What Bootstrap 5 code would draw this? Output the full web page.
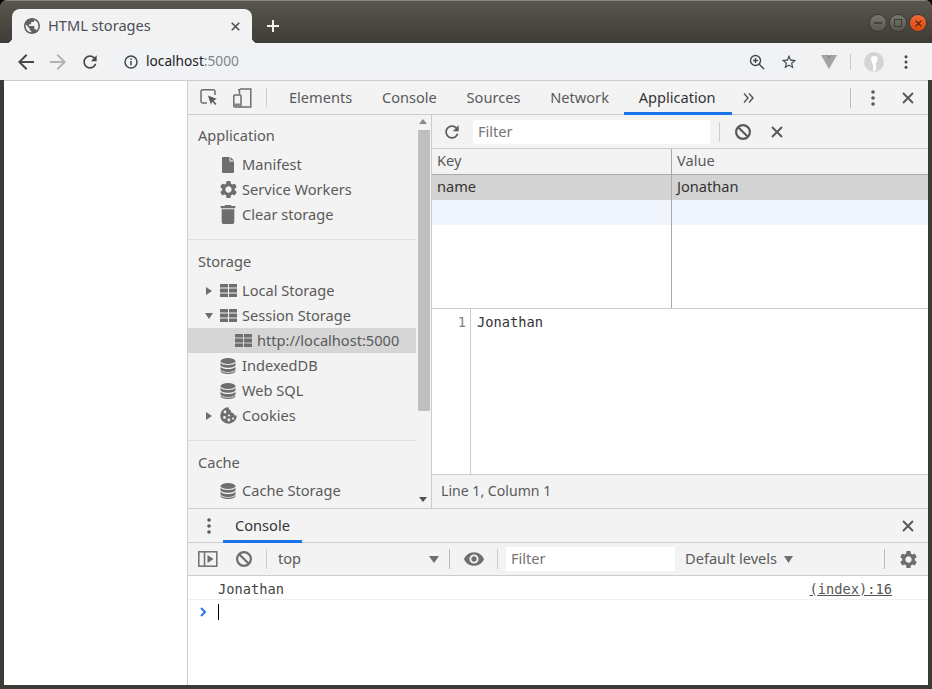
<!DOCTYPE html>
<html lang="en"><head><meta charset="utf-8"><title>HTML storages</title>
<link rel="stylesheet" href="https://cdn.jsdelivr.net/npm/bootstrap@5.3.0/dist/css/bootstrap.min.css">
<style>
html,body{margin:0;height:689px;overflow:hidden;background:#000}
body{font-family:"Noto Sans","Liberation Sans",sans-serif;font-size:14.6px;color:#5a5a5a;line-height:1.2}
svg{display:block;flex:none}
.win{width:932px;height:689px;background:#3c3b37;border-radius:7px 7px 0 0;overflow:hidden}
.titlebar{height:43px;flex:none;background:linear-gradient(#59564e,#3e3c36);border-top:1px solid #85857f;padding-left:12px}
.btab{width:240px;height:34px;margin-top:8px;background:#f2f2f2;border-radius:8px 8px 0 0;padding:0 12px 0 12px;color:#4a5058;font-size:14.6px;position:relative}
.btab::before,.btab::after{content:"";position:absolute;bottom:0;width:6px;height:6px}
.btab::before{left:-6px;background:radial-gradient(circle at 0 0,transparent 6px,#f2f2f2 6.500px)}
.btab::after{right:-6px;background:radial-gradient(circle at 100% 0,transparent 6px,#f2f2f2 6.500px)}
.plus{margin-left:15px;margin-top:19px}
.wbtns{margin-left:auto;padding-right:6px;gap:4px;margin-top:2px}
.wb{width:16px;height:16px;border-radius:50%;background:linear-gradient(#77766f,#57564f);box-shadow:0 0 0 1px #3a3934}
.wb.cl{background:linear-gradient(#f0693a,#d9480f)}
.mainwrap{padding:0 4px 4px;height:609px;flex:none}
.chrome-bar{height:37px;flex:none;background:#f2f2f2}
.navic{width:32px}
.omni{width:694px;height:29px;background:#f0f2f5;border-radius:15px;margin-left:6px;padding:0 9px 0 12px;color:#202124;font-size:13.7px}
.omni .port{color:#80868b}
.rtools{padding-left:10px}
.vsep{width:1px;background:#ccc;flex:none}
.bodyrow{height:605px;border-top:1px solid #ccc;background:#fff}
.pagearea{width:184px;background:#fff;border-right:1px solid #ccc;flex:none}
.dt{width:740px;background:#fff}
.dttabs{height:34px;background:#f3f3f3;border-bottom:1px solid #ccc;flex:none}
.dtic{width:33px}
.tb{height:33px;padding:0 14.9px;line-height:32px;color:#5a5a5a;position:relative;flex:none}
.tb.on{color:#333}
.tb.on::after{content:"";position:absolute;left:0;right:-1px;bottom:-1px;height:3px;background:#1a73e8}
.tb.dwr{margin-left:12px;padding:0 12px}
.tb.dwr::after{left:0;right:0}
.sb{width:244px;flex:none;background:#f3f3f3;border-right:1px solid #ccc;height:393px;overflow:hidden}
.sbin{width:228px;flex:none}
.sect{padding:9px 0 12px;border-bottom:1px solid #e0e0e0}
.sect.first{padding-top:8px}
.sh{height:25px;line-height:25px;padding-left:10px;margin-bottom:4px;color:#5a5a5a}
.sect.border-0 .sh{margin-bottom:3px}
.si{height:25px;color:#5a5a5a;padding-left:30px;gap:4px}
.si.ex{padding-left:16px}
.si.sel{background:#d6d6d6;padding-left:45px}
.si .ic{width:20px;display:flex;justify-content:center}
.si .ic.tm{margin-left:-4px}
.tw{width:10px;margin-right:4px;flex:none}
.sbar{width:15px;flex:none;padding-left:2px;background:#f3f3f3;position:relative}
.thumb{height:281px;width:12px;background:#bfbfbf;margin-top:15px}
.arr{width:0;height:0;border-left:4px solid transparent;border-right:4px solid transparent;position:absolute;left:3px}
.arr.u{top:4px;border-bottom:5px solid #8a8a8a}
.arr.d{bottom:6px;border-top:5px solid #505050}
.rp{width:496px;flex:none;height:393px}
.rt{height:34px;background:#f3f3f3;border-bottom:1px solid #ccc;flex:none;padding-left:8px}
.filt{background:#fff;height:24px;line-height:22px;padding-left:5px;color:#757575;flex:none}
.th{height:26px;background:#f3f3f3;border-bottom:1px solid #aaa;flex:none}
.c1{width:240px;flex:none;border-right:1px solid #aaa;padding-left:5px;line-height:23px;height:100%}
.c2{padding-left:5px;flex:1;line-height:23px;height:100%}
.tr{height:25px;flex:none}
.tr.s{background:#d3d3d3;color:#333}
.tr.z{background:#f0f5fd}
.fill{height:83px;flex:none}
.ed{flex:1;border-top:1px solid #ccc;min-height:0;background:#fff;font:13.7px/1 "DejaVu Sans Mono",monospace}
.gut{width:39px;border-right:1px solid #ccc;text-align:right;padding:7px 4px 0 0;color:#808080;flex:none}
.code{padding:7px 0 0 6px;color:#333}
.stb{height:34px;background:#f3f3f3;border-top:1px solid #ccc;flex:none;padding-left:9px;color:#5a5a5a;font-size:14.1px}
.dr{height:35px;background:#f3f3f3;border-top:1px solid #ccc;border-bottom:1px solid #ccc;flex:none}
.ct{height:33px;background:#f3f3f3;border-bottom:1px solid #ccc;flex:none}
.log{height:24px;border-bottom:1px solid #f0f0f0;font:13.7px/26px "DejaVu Sans Mono",monospace;color:#444;padding:0 36px 0 30px;background:#fff;flex:none}
.log u{color:#555}
.prompt{height:24px;padding-left:12px;background:#fff;flex:none}
.caret{width:1px;height:16px;background:#000;margin-left:11px}
.lvl{color:#5a5a5a}
</style></head><body>
<svg width="0" height="0" class="position-absolute">
<defs>
<symbol id="x" viewBox="0 0 12 12"><path d="M1 1l10 10M11 1L1 11" stroke="currentColor" stroke-width="2" fill="none"/></symbol>
<symbol id="dots" viewBox="0 0 4 16"><circle cx="2" cy="2" r="1.8"/><circle cx="2" cy="8" r="1.8"/><circle cx="2" cy="14" r="1.8"/></symbol>
<symbol id="grid" viewBox="0 0 17 13"><path d="M0 0h8v3.4H0zM9 0h8v3.4H9zM0 4.6h8v3.8H0zM9 4.6h8v3.8H9zM0 9.6h8V13H0zM9 9.6h8V13H9z"/></symbol>
<symbol id="db" viewBox="0 0 16 16"><ellipse cx="8" cy="3" rx="7.5" ry="3"/><path d="M.5 4.6C1.5 6.4 4.6 7 8 7s6.500-.6 7.500-2.400V7c0 1.600-3.400 2.800-7.500 2.800S.5 8.600.5 7zM.5 8.800c1 1.800 4.100 2.300 7.500 2.300s6.500-.5 7.500-2.300v2.400c0 1.600-3.400 2.800-7.500 2.800S.5 12.800.5 11.200zM.5 12.500c1 1.700 4.100 2.200 7.500 2.200s6.500-.5 7.500-2.200v.5c0 1.600-3.400 3-7.500 3s-7.500-1.400-7.500-3z"/></symbol>
<symbol id="gear" viewBox="0 0 24 24"><path fill-rule="evenodd" d="M19.14 12.94c.04-.3.06-.61.06-.94 0-.32-.02-.64-.07-.94l2.03-1.58a.49.49 0 0 0 .12-.61l-1.92-3.32a.488.488 0 0 0-.59-.22l-2.39.96c-.5-.38-1.03-.7-1.62-.94l-.36-2.54a.484.484 0 0 0-.48-.41h-3.84c-.24 0-.43.17-.47.41l-.36 2.54c-.59.24-1.13.57-1.62.94l-2.39-.96c-.22-.08-.47 0-.59.22L2.74 8.87c-.12.21-.08.47.12.61l2.03 1.58c-.05.3-.09.63-.09.94s.02.64.07.94l-2.03 1.58a.49.49 0 0 0-.12.61l1.92 3.32c.12.22.37.29.59.22l2.39-.96c.5.38 1.03.7 1.62.94l.36 2.54c.05.24.24.41.48.41h3.84c.24 0 .44-.17.47-.41l.36-2.54c.59-.24 1.13-.56 1.62-.94l2.39.96c.22.08.47 0 .59-.22l1.92-3.32c.12-.22.07-.47-.12-.61l-2.01-1.58zM12 15.600c-1.98 0-3.600-1.620-3.600-3.600s1.620-3.600 3.600-3.600 3.600 1.620 3.600 3.600-1.620 3.600-3.600 3.600z"/></symbol>
<symbol id="reload" viewBox="0 0 24 24"><path d="M17.65 6.35C16.2 4.9 14.21 4 12 4c-4.42 0-7.99 3.58-7.99 8s3.57 8 7.99 8c3.73 0 6.84-2.55 7.73-6h-2.08c-.82 2.33-3.04 4-5.65 4-3.31 0-6-2.69-6-6s2.69-6 6-6c1.66 0 3.14.69 4.22 1.78L13 11h7V4l-2.35 2.35z"/></symbol>
<symbol id="block" viewBox="0 0 16 16"><circle cx="8" cy="8" r="6.900" fill="none" stroke="currentColor" stroke-width="2.200"/><path d="M3.200 3.200l9.600 9.600" stroke="currentColor" stroke-width="2.200"/></symbol>
</defs></svg>
<div class="win d-flex flex-column">
 <div class="titlebar d-flex align-items-start">
  <div class="btab d-flex align-items-center flex-shrink-0">
   <svg width="16" height="16" viewBox="2 2 20 20" fill="#5f6368"><path d="M12 2C6.48 2 2 6.48 2 12s4.48 10 10 10 10-4.48 10-10S17.52 2 12 2zm-1 17.930c-3.950-.49-7-3.850-7-7.930 0-.62.08-1.210.21-1.790L9 15v1c0 1.100.9 2 2 2v1.930zm6.900-2.540c-.26-.81-1-1.390-1.900-1.390h-1v-3c0-.55-.45-1-1-1H8v-2h2c.55 0 1-.45 1-1V7h2c1.100 0 2-.9 2-2v-.41c2.930 1.190 5 4.060 5 7.410 0 2.080-.8 3.970-2.100 5.390z"/></svg>
   <span class="ms-2">HTML storages</span>
   <svg class="ms-auto" width="9" height="9" color="#4a4a4a"><use href="#x"/></svg>
  </div>
  <svg class="plus" width="12" height="12" viewBox="0 0 12 12"><path d="M6 0v12M0 6h12" stroke="#f0f0f0" stroke-width="2"/></svg>
  <div class="wbtns d-flex align-self-center">
   <div class="wb d-flex align-items-center justify-content-center"><svg width="8" height="2"><path d="M0 1h8" stroke="#3a3934" stroke-width="1.500"/></svg></div>
   <div class="wb d-flex align-items-center justify-content-center"><svg width="8" height="8"><rect x=".5" y=".5" width="7" height="7" fill="none" stroke="#3a3934"/></svg></div>
   <div class="wb cl d-flex align-items-center justify-content-center"><svg width="7" height="7" color="#5a1c05"><use href="#x"/></svg></div>
  </div>
 </div>
 <div class="chrome-bar d-flex align-items-center">
  <div class="navic d-flex justify-content-center" style="margin-left:10px"><svg width="16" height="16" viewBox="4 4 16 16" fill="#45474a"><path d="M20 11H7.830l5.590-5.590L12 4l-8 8 8 8 1.410-1.410L7.830 13H20z"/></svg></div>
  <div class="navic d-flex justify-content-center"><svg width="16" height="16" viewBox="4 4 16 16" fill="#b0b2b4"><path d="M4 11h12.170l-5.590-5.590L12 4l8 8-8 8-1.410-1.410L16.170 13H4z"/></svg></div>
  <div class="navic d-flex justify-content-center"><svg width="20" height="20" fill="#45474a"><use href="#reload"/></svg></div>
  <div class="omni d-flex align-items-center flex-shrink-0">
   <svg width="14" height="14" viewBox="0 0 14 14"><circle cx="7" cy="7" r="6" fill="none" stroke="#45474a" stroke-width="1.500"/><path d="M7 6v4.200M7 3.500v1.500" stroke="#45474a" stroke-width="1.500"/></svg>
   <span class="ms-2"><span>localhost</span><span class="port">:5000</span></span>
   <svg class="ms-auto" width="16" height="16" viewBox="0 0 16 16" fill="none" stroke="#45474a" stroke-width="1.400"><circle cx="6.500" cy="6.500" r="5"/><path d="M10.200 10.200L15 15M6.500 4v5M4 6.500h5"/></svg>
   <svg style="margin-left:16px" width="16" height="16" viewBox="1 1 22 22" fill="#45474a"><path d="M22 9.240l-7.190-.62L12 2 9.190 8.630 2 9.240l5.460 4.730L5.820 21 12 17.270 18.180 21l-1.630-7.030L22 9.240zM12 15.400l-3.760 2.270 1-4.280-3.320-2.880 4.380-.38L12 6.100l1.710 4.040 4.380.38-3.320 2.880 1 4.280L12 15.400z"/></svg>
  </div>
  <div class="rtools d-flex align-items-center">
   <svg width="16" height="14" viewBox="0 0 16 14" style="margin-left:5px"><path d="M0 0h5.500L8 4.500 10.500 0H16L8 14z" fill="#a3a3a3"/><path d="M5.500 0h1.800L8 2 8.700 0h1.800L8 4.500z" fill="#777"/></svg>
   <div class="vsep" style="height:16px;margin:0 13px"></div>
   <svg width="20" height="20" viewBox="0 0 20 20"><circle cx="10" cy="10" r="10" fill="#d2d4d6"/><path d="M7 6c0-2.500 6-3 6.500 0 .5 3-1 4-1.500 5-.3 1 0 3 .5 6.500L9 20c0-4 .5-6-.5-8C7.500 10 7 8 7 6z" fill="#fff"/></svg>
   <svg style="margin-left:20px" width="4" height="14" viewBox="0 0 4 16" fill="#45474a"><use href="#dots"/></svg>
  </div>
 </div>
 <div class="mainwrap">
 <div class="bodyrow d-flex">
  <div class="pagearea"></div>
  <div class="dt d-flex flex-column">
   <div class="dttabs d-flex align-items-center">
    <div class="dtic d-flex justify-content-center" style="margin-left:5px"><svg width="19" height="19" viewBox="0 0 19 19" fill="none"><path d="M7 15H2.800A1.800 1.800 0 0 1 1 13.200V3.500A1.800 1.800 0 0 1 2.800 1.700h10.400A1.800 1.800 0 0 1 15 3.500V7" stroke="#6e6e6e" stroke-width="1.500"/><path d="M8 7.500l9 3.500-3.500 1.400 3 3.500-1.300 1.200-3-3.500L11 17z" fill="#5a5a5a"/></svg></div>
    <div class="dtic d-flex justify-content-center"><svg width="19" height="20" viewBox="0 0 19 20" fill="none"><path d="M5 1.700h1.500V6M7 1h10.800v18H7" stroke="#6e6e6e" stroke-width="1.500" /><rect x=".8" y="7" width="7.200" height="12" rx="1" fill="#f3f3f3" stroke="#6e6e6e" stroke-width="1.500"/><path d="M1 15.500h7v3.500H1z" fill="#8a8a8a"/></svg></div>
    <div class="vsep" style="height:19px;margin:0 7px 0 7px"></div>
    <div class="tb">Elements</div><div class="tb">Console</div><div class="tb">Sources</div><div class="tb">Network</div><div class="tb on">Application</div>
    <svg style="margin-left:12px" width="11" height="10" viewBox="0 0 11 10" fill="none" stroke="#5a5a5a" stroke-width="1.500"><path d="M1 .5L5 5 1 9.500M6 .5L10 5 6 9.500"/></svg>
    <div class="vsep ms-auto" style="height:20px;background:#bbb"></div>
    <svg style="margin-left:20px" width="4" height="16" fill="#5a5a5a"><use href="#dots"/></svg>
    <svg style="margin:0 14px 0 27px" width="12" height="12" color="#5a5a5a"><use href="#x"/></svg>
   </div>
   <div class="d-flex flex-shrink-0">
    <div class="sb d-flex">
     <div class="sbin">
      <div class="sect first">
       <div class="sh">Application</div>
       <div class="si d-flex align-items-center"><span class="ic"><svg width="12" height="16" viewBox="0 0 12 16" fill="#6e6e6e"><path d="M1 0h6.500v4.500H12V15a1 1 0 0 1-1 1H1a1 1 0 0 1-1-1V1a1 1 0 0 1 1-1zM8.500 0L12 3.500H8.500z"/></svg></span><span>Manifest</span></div>
       <div class="si d-flex align-items-center"><span class="ic"><svg width="21" height="21" fill="#6e6e6e"><use href="#gear"/></svg></span><span>Service Workers</span></div>
       <div class="si d-flex align-items-center"><span class="ic"><svg width="16" height="19" viewBox="5 3 14 18" fill="#6e6e6e"><path d="M6 19c0 1.100.9 2 2 2h8c1.100 0 2-.9 2-2V7H6v12zM19 4h-3.500l-1-1h-5l-1 1H5v2h14V4z"/></svg></span><span>Clear storage</span></div>
      </div>
      <div class="sect">
       <div class="sh">Storage</div>
       <div class="si ex d-flex align-items-center"><svg class="tw" height="10" viewBox="0 0 10 10" fill="#6e6e6e"><path d="M2 1l6 4-6 4z"/></svg><span class="ic tm"><svg width="17" height="13" fill="#6e6e6e"><use href="#grid"/></svg></span><span>Local Storage</span></div>
       <div class="si ex d-flex align-items-center"><svg class="tw" height="10" viewBox="0 0 10 10" fill="#6e6e6e"><path d="M1 2l4 6 4-6z"/></svg><span class="ic tm"><svg width="17" height="13" fill="#6e6e6e"><use href="#grid"/></svg></span><span>Session Storage</span></div>
       <div class="si sel d-flex align-items-center"><span class="ic"><svg width="17" height="13" fill="#6e6e6e"><use href="#grid"/></svg></span><span>http://localhost:5000</span></div>
       <div class="si d-flex align-items-center"><span class="ic"><svg width="16" height="16" fill="#6e6e6e"><use href="#db"/></svg></span><span>IndexedDB</span></div>
       <div class="si d-flex align-items-center"><span class="ic"><svg width="16" height="16" fill="#6e6e6e"><use href="#db"/></svg></span><span>Web SQL</span></div>
       <div class="si ex d-flex align-items-center"><svg class="tw" height="10" viewBox="0 0 10 10" fill="#6e6e6e"><path d="M2 1l6 4-6 4z"/></svg><span class="ic tm"><svg width="17" height="17" viewBox="0 0 17 17"><path fill="#6e6e6e" d="M8.500 0.200a8.300 8.300 0 1 0 8.300 8.300c-1.800.3-3-.6-3.200-2.300-1.800 0-3-1.200-2.800-3C9.300 3 8.500 1.800 8.500.2z"/><g fill="#f3f3f3"><circle cx="5" cy="5" r="1.400"/><circle cx="4.500" cy="10.500" r="1.400"/><circle cx="9" cy="8.500" r="1.100"/><circle cx="8.800" cy="13" r="1.400"/><circle cx="13" cy="11.500" r="1.100"/></g></svg></span><span>Cookies</span></div>
      </div>
      <div class="sect border-0">
       <div class="sh">Cache</div>
       <div class="si d-flex align-items-center"><span class="ic"><svg width="16" height="16" fill="#6e6e6e"><use href="#db"/></svg></span><span>Cache Storage</span></div>
      </div>
     </div>
     <div class="sbar"><div class="arr u"></div><div class="thumb"></div><div class="arr d"></div></div>
    </div>
    <div class="rp d-flex flex-column">
     <div class="rt d-flex align-items-center">
      <svg width="20" height="20" fill="#5a5a5a" style="margin-left:2px"><use href="#reload"/></svg>
      <div class="filt" style="width:237px;margin-left:11px">Filter</div>
      <div class="vsep" style="height:20px;margin:0 15px 0 9px"></div>
      <svg width="16" height="16" color="#5a5a5a"><use href="#block"/></svg>
      <svg style="margin-left:20px" width="12" height="12" color="#5a5a5a"><use href="#x"/></svg>
     </div>
     <div class="th d-flex"><div class="c1">Key</div><div class="c2">Value</div></div>
     <div class="tr s d-flex"><div class="c1">name</div><div class="c2">Jonathan</div></div>
     <div class="tr z d-flex"><div class="c1"></div><div class="c2"></div></div>
     <div class="fill d-flex"><div class="c1"></div><div class="c2"></div></div>
     <div class="ed d-flex"><div class="gut">1</div><div class="code">Jonathan</div></div>
     <div class="stb d-flex align-items-center">Line 1, Column 1</div>
    </div>
   </div>
   <div class="dr d-flex align-items-center">
    <svg style="margin-left:19px" width="4" height="16" fill="#5a5a5a"><use href="#dots"/></svg>
    <div class="tb on dwr">Console</div>
    <svg class="ms-auto" style="margin-right:14px" width="12" height="12" color="#5a5a5a"><use href="#x"/></svg>
   </div>
   <div class="ct d-flex align-items-center">
    <svg style="margin-left:10px" width="20" height="16" viewBox="0 0 20 16" fill="none" stroke="#6e6e6e" stroke-width="1.500"><rect x=".8" y=".8" width="18" height="14.400"/><path d="M6.500 1v14"/><path d="M9.500 4l6 4-6 4z" fill="#6e6e6e" stroke="none"/></svg>
    <svg style="margin-left:18px" width="16" height="16" color="#6e6e6e"><use href="#block"/></svg>
    <div class="vsep" style="height:20px;margin-left:14px"></div>
    <div style="width:172px;padding-left:11px" class="d-flex align-items-center flex-shrink-0"><span>top</span><svg class="ms-auto" width="10" height="7"><path d="M0 0h10L5 7z" fill="#6e6e6e"/></svg></div>
    <div class="vsep" style="height:20px;margin-left:10px;background:#bbb"></div>
    <svg style="margin-left:14px" width="20" height="20" viewBox="1 2 22 20" fill="#6e6e6e"><path d="M12 4.500C7 4.500 2.730 7.610 1 12c1.730 4.390 6 7.500 11 7.500s9.270-3.110 11-7.500c-1.730-4.390-6-7.500-11-7.500zM12 17c-2.760 0-5-2.240-5-5s2.240-5 5-5 5 2.240 5 5-2.240 5-5 5zm0-8c-1.660 0-3 1.340-3 3s1.340 3 3 3 3-1.340 3-3-1.340-3-3-3z"/></svg>
    <div class="vsep" style="height:20px;margin-left:13px"></div>
    <div class="filt" style="width:169px;margin-left:8px">Filter</div>
    <span class="lvl" style="margin-left:10px">Default levels</span>
    <svg style="margin-left:7px" width="9" height="7"><path d="M0 0h9L4.500 7z" fill="#6e6e6e"/></svg>
    <div class="vsep ms-auto" style="height:20px;background:#bbb"></div>
    <svg style="margin:0 9px 0 13px" width="21" height="21" fill="#6e6e6e"><use href="#gear"/></svg>
   </div>
   <div class="log d-flex justify-content-between"><span>Jonathan</span><u>(index):16</u></div>
   <div class="prompt d-flex align-items-center"><svg width="7" height="10" viewBox="0 0 7 10" fill="none" stroke="#2f75e8" stroke-width="2"><path d="M1 1l4 4-4 4"/></svg><div class="caret"></div></div>
  </div>
 </div>
 </div>
</div>
</body></html>
